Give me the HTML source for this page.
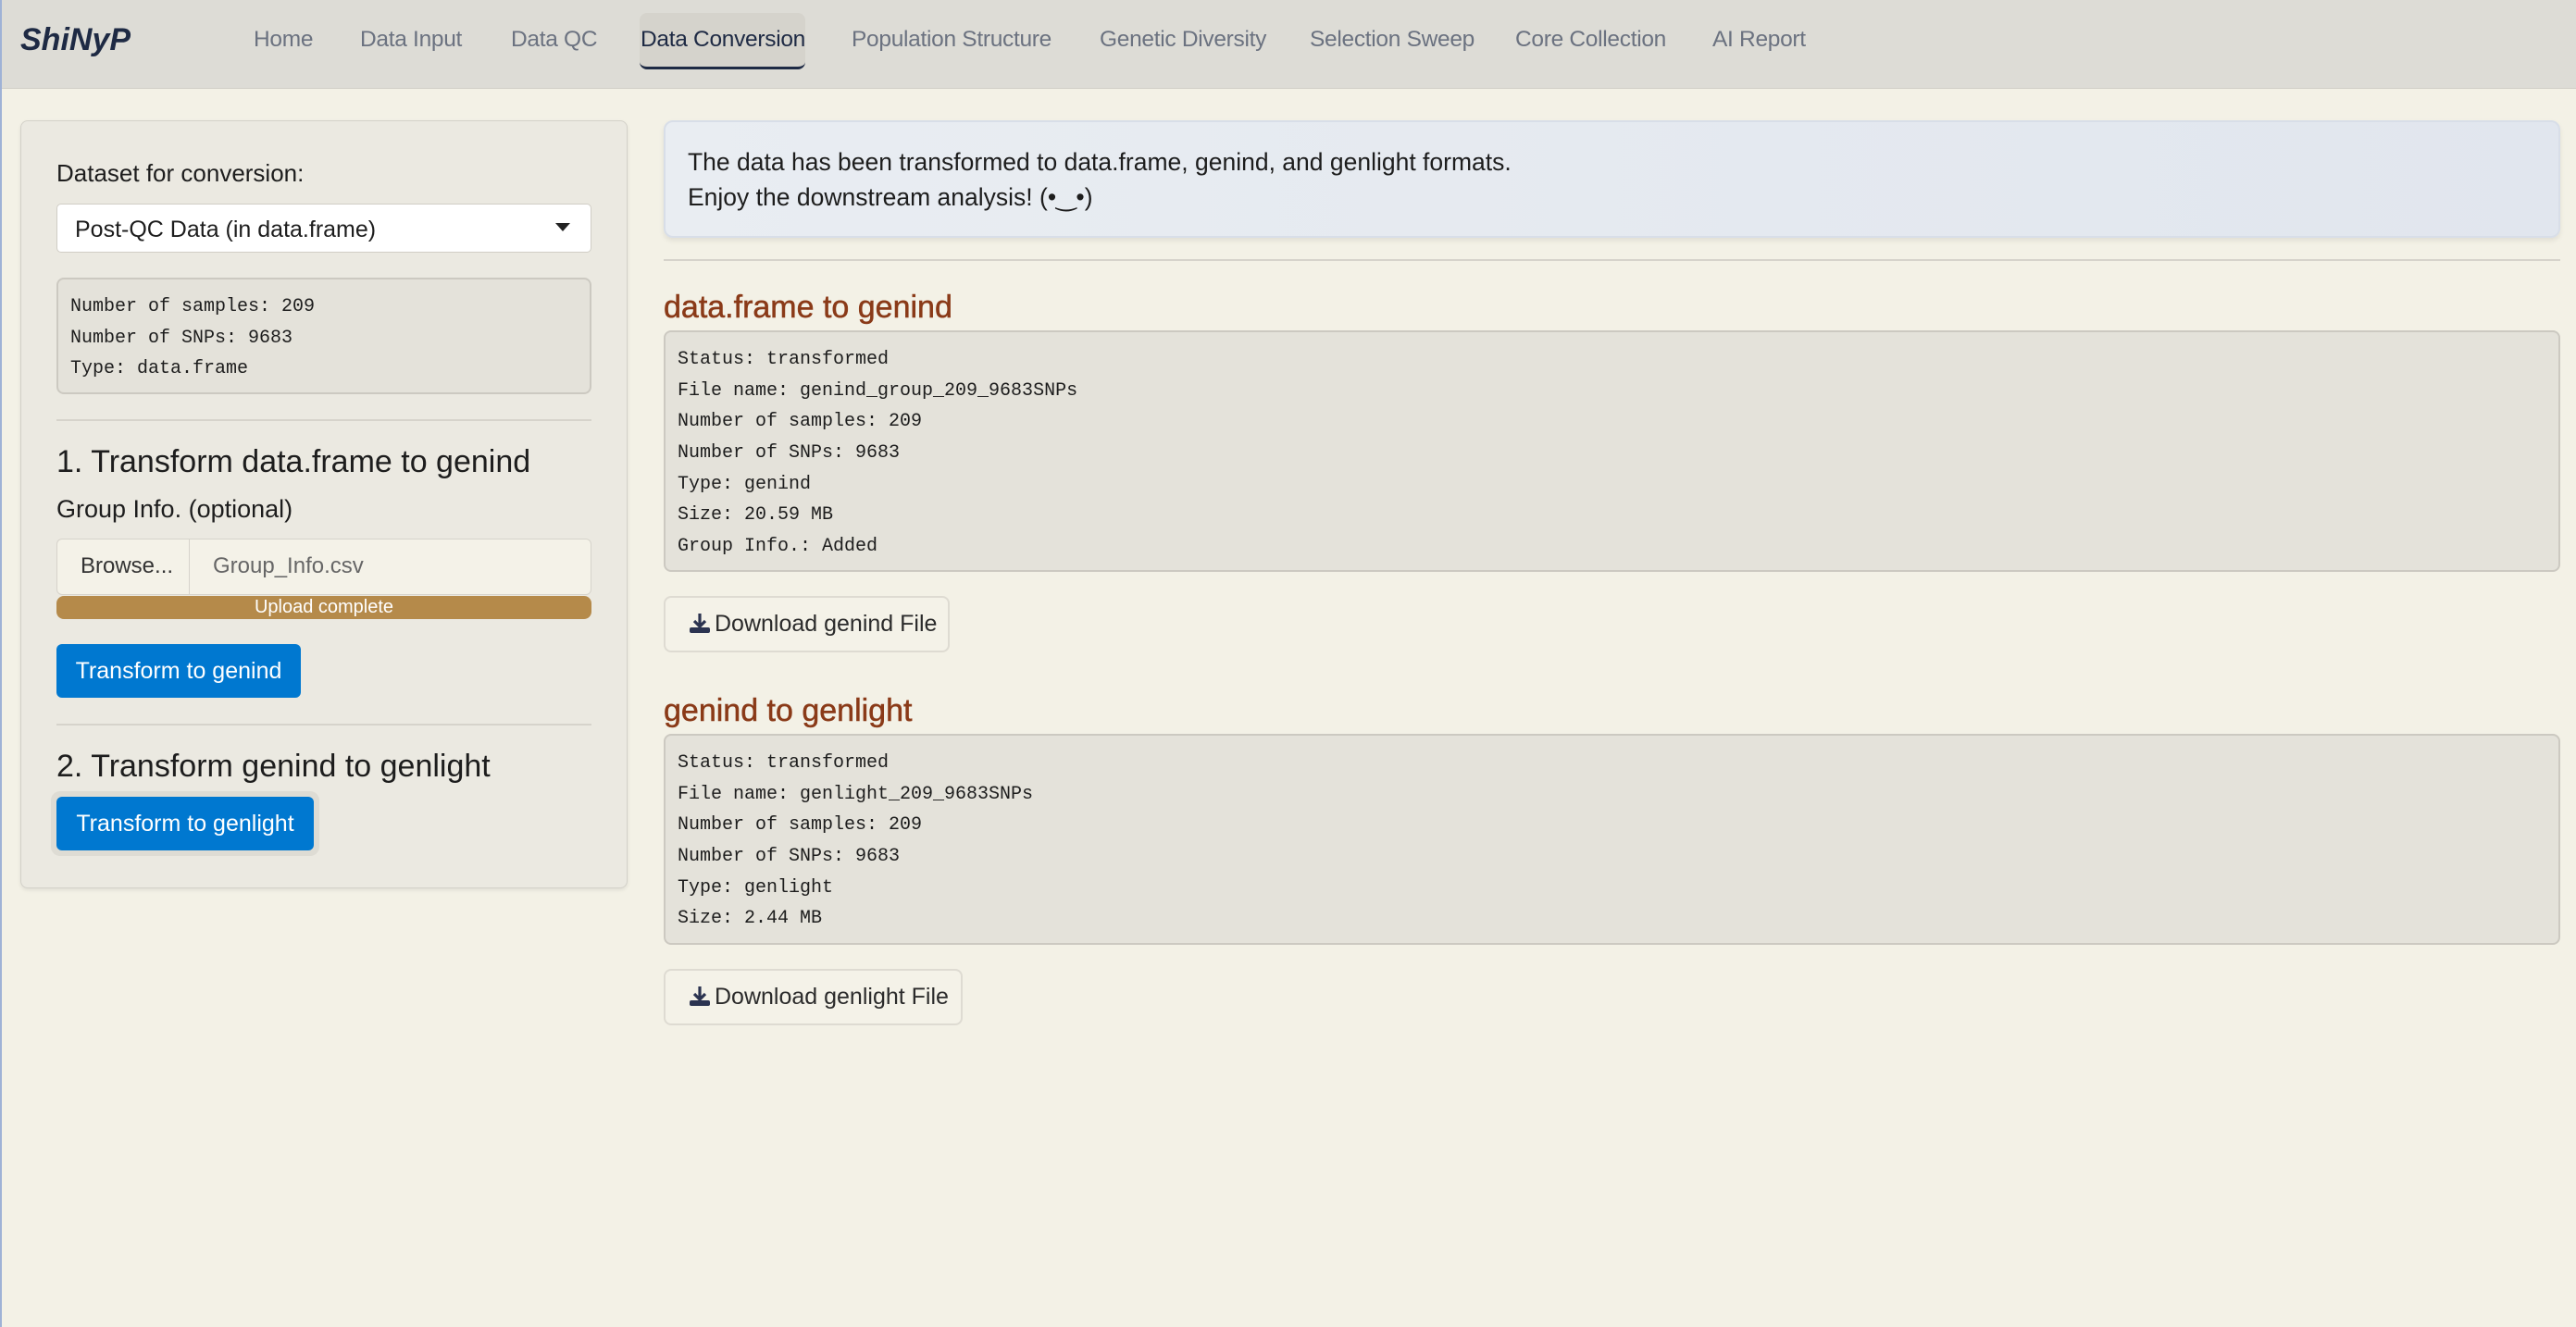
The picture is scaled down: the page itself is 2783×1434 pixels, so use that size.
<!DOCTYPE html>
<html><head><meta charset="utf-8"><style>
*{box-sizing:border-box;margin:0;padding:0}
body{width:2783px;height:1434px;background:#f3f1e6;font-family:"Liberation Sans","Noto Sans CJK TC",sans-serif;color:#1d1d1d;position:relative;overflow:hidden;border-left:2px solid #9fb2d6}
.a{position:absolute;white-space:nowrap}
.nav{position:absolute;left:0;top:0;width:2783px;height:96px;background:#dddcd6;border-bottom:1px solid #d2d0c8}
.brand{left:20px;top:24px;font-size:34px;font-weight:bold;font-style:italic;color:#1e2a44}
.ni{top:29px;font-size:24.5px;color:#6b7280;letter-spacing:-0.3px}
.act{left:689px;top:14px;width:179px;height:61px;background:#d5d3cc;border-radius:8px;border-bottom:3px solid #1e2a44}
.panel{left:20px;top:130px;width:656px;height:830px;background:#ebe9e1;border:1px solid #d3d1c9;border-radius:8px;box-shadow:0 2px 4px rgba(0,0,0,.08)}
.pre{background:#e4e2da;border:2px solid #ccc9c1;border-radius:8px;font-family:"Liberation Mono",monospace;font-size:20px;color:#1d1d1d}
.pre div{height:33.7px;line-height:33.7px}
.hr{height:2px;background:#d6d3cb}
.btn{background:#0078d0;color:#fff;font-size:25px;border-radius:6px;text-align:center}
.dl{background:#f4f2e8;border:2px solid #dedbd2;border-radius:8px;font-size:25px;color:#2b2b2b}
.dl svg{vertical-align:-3px;margin-right:4px}
.h3{font-size:34px;color:#8a3a18;-webkit-text-stroke:0.5px #8a3a18}
</style></head><body>
<div class="nav"></div>
<div class="a brand">ShiNyP</div>
<div class="a act"></div>
<div class="a ni" style="left:272px">Home</div>
<div class="a ni" style="left:387px">Data Input</div>
<div class="a ni" style="left:550px">Data QC</div>
<div class="a ni" style="left:690px;color:#1e2a44;width:178px;text-align:center">Data Conversion</div>
<div class="a ni" style="left:918px">Population Structure</div>
<div class="a ni" style="left:1186px">Genetic Diversity</div>
<div class="a ni" style="left:1413px">Selection Sweep</div>
<div class="a ni" style="left:1635px">Core Collection</div>
<div class="a ni" style="left:1848px">AI Report</div>

<div class="a panel"></div>
<div class="a" style="left:59px;top:172px;font-size:26px">Dataset for conversion:</div>
<div class="a" style="left:59px;top:220px;width:578px;height:53px;background:#fff;border:1px solid #d0cdc5;border-radius:5px;font-size:25px;padding:13px 19px">Post-QC Data (in data.frame)<span style="position:absolute;right:22px;top:20px;border-left:8px solid transparent;border-right:8px solid transparent;border-top:9px solid #222"></span></div>
<div class="a pre" style="left:59px;top:300px;width:578px;height:126px;padding:13px 13px"><div>Number of samples: 209</div><div>Number of SNPs: 9683</div><div>Type: data.frame</div></div>
<div class="a hr" style="left:59px;top:453px;width:578px"></div>
<div class="a" style="left:59px;top:480px;font-size:34px">1. Transform data.frame to genind</div>
<div class="a" style="left:59px;top:535px;font-size:27px">Group Info. (optional)</div>
<div class="a" style="left:59px;top:582px;width:578px;height:61px;background:#f4f2e8;border:1px solid #d6d3cb;border-radius:6px"></div>
<div class="a" style="left:202px;top:582px;width:1px;height:61px;background:#d6d3cb"></div>
<div class="a" style="left:85px;top:598px;font-size:24px;color:#333">Browse...</div>
<div class="a" style="left:228px;top:598px;font-size:24px;color:#666">Group_Info.csv</div>
<div class="a" style="left:59px;top:644px;width:578px;height:25px;background:#b58a4a;border-radius:8px;color:#fff;font-size:20px;text-align:center;line-height:25px">Upload complete</div>
<div class="a btn" style="left:59px;top:696px;width:264px;height:58px;line-height:58px">Transform to genind</div>
<div class="a hr" style="left:59px;top:782px;width:578px"></div>
<div class="a" style="left:59px;top:809px;font-size:34px">2. Transform genind to genlight</div>
<div class="a" style="left:53px;top:855px;width:290px;height:70px;background:#dedcd4;border-radius:10px"></div>
<div class="a btn" style="left:59px;top:861px;width:278px;height:58px;line-height:58px">Transform to genlight</div>

<div class="a" style="left:715px;top:130px;width:2049px;height:127px;background:linear-gradient(90deg,#e9edf2,#e1e6ee);border:2px solid #d8dee8;border-radius:10px;box-shadow:0 3px 6px rgba(0,0,0,.08)"></div>
<div class="a" style="left:741px;top:156px;font-size:26.5px;line-height:38px">The data has been transformed to data.frame, genind, and genlight formats.<br>Enjoy the downstream analysis! (•‿•)</div>
<div class="a hr" style="left:715px;top:280px;width:2049px"></div>

<div class="a h3" style="left:715px;top:313px">data.frame to genind</div>
<div class="a pre" style="left:715px;top:357px;width:2049px;height:261px;padding:13px 13px"><div>Status: transformed</div><div>File name: genind_group_209_9683SNPs</div><div>Number of samples: 209</div><div>Number of SNPs: 9683</div><div>Type: genind</div><div>Size: 20.59 MB</div><div>Group Info.: Added</div></div>
<div class="a dl" style="left:715px;top:644px;width:309px;height:61px;padding:14px 0 0 25px"><svg width="24" height="24" viewBox="0 0 24 24"><path d="M12 2v13M6 10l6 6 6-6" stroke="#2b3350" stroke-width="3.2" fill="none"/><rect x="1" y="17" width="22" height="6" rx="2" fill="#2b3350"/></svg>Download genind File</div>

<div class="a h3" style="left:715px;top:749px">genind to genlight</div>
<div class="a pre" style="left:715px;top:793px;width:2049px;height:228px;padding:13px 13px"><div>Status: transformed</div><div>File name: genlight_209_9683SNPs</div><div>Number of samples: 209</div><div>Number of SNPs: 9683</div><div>Type: genlight</div><div>Size: 2.44 MB</div></div>
<div class="a dl" style="left:715px;top:1047px;width:323px;height:61px;padding:14px 0 0 25px"><svg width="24" height="24" viewBox="0 0 24 24"><path d="M12 2v13M6 10l6 6 6-6" stroke="#2b3350" stroke-width="3.2" fill="none"/><rect x="1" y="17" width="22" height="6" rx="2" fill="#2b3350"/></svg>Download genlight File</div>
</body></html>
